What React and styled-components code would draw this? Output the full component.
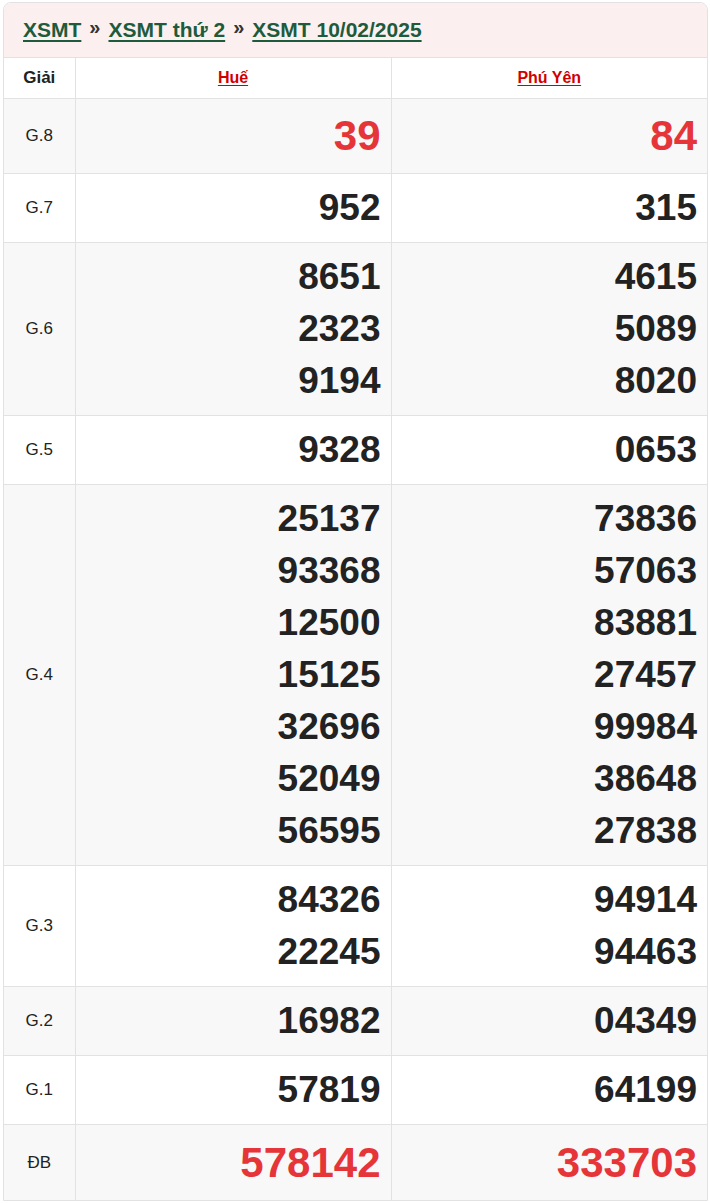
import React from 'react'
import styled, { createGlobalStyle } from 'styled-components'

const GlobalStyle = createGlobalStyle`
  body {
    margin: 0;
    background: #fff;
    font-family: "Liberation Sans", Arial, sans-serif;
  }
`

const data = {
  provinces: ['Huế', 'Phú Yên'],
  rows: [
    { label: 'G.8', size: 'big', values: [['39'], ['84']] },
    { label: 'G.7', values: [['952'], ['315']] },
    { label: 'G.6', values: [['8651', '2323', '9194'], ['4615', '5089', '8020']] },
    { label: 'G.5', values: [['9328'], ['0653']] },
    {
      label: 'G.4',
      values: [
        ['25137', '93368', '12500', '15125', '32696', '52049', '56595'],
        ['73836', '57063', '83881', '27457', '99984', '38648', '27838'],
      ],
    },
    { label: 'G.3', values: [['84326', '22245'], ['94914', '94463']] },
    { label: 'G.2', values: [['16982'], ['04349']] },
    { label: 'G.1', values: [['57819'], ['64199']] },
    { label: 'ĐB', size: 'special', values: [['578142'], ['333703']] },
  ],
}

export default function App() {
  return (
    <>
      <GlobalStyle />
      <Box>
        <Crumbs>
          <Crumb href="#">XSMT</Crumb>
          <Sep>»</Sep>
          <Crumb href="#">XSMT thứ 2</Crumb>
          <Sep>»</Sep>
          <Crumb href="#">XSMT 10/02/2025</Crumb>
        </Crumbs>
        <Table>
          <colgroup>
            <col style={{ width: 71 }} />
            <col />
            <col />
          </colgroup>
          <thead>
            <tr>
              <HeadCell>Giải</HeadCell>
              {data.provinces.map((p) => (
                <HeadCell key={p}>
                  <Province href="#">{p}</Province>
                </HeadCell>
              ))}
            </tr>
          </thead>
          <tbody>
            {data.rows.map((row, i) => (
              <Row key={row.label} $odd={i % 2 === 0}>
                <Label>{row.label}</Label>
                {row.values.map((list, j) => (
                  <NumCell key={j}>
                    {list.map((n) => (
                      <Num key={n} $size={row.size}>
                        {n}
                      </Num>
                    ))}
                  </NumCell>
                ))}
              </Row>
            ))}
          </tbody>
        </Table>
      </Box>
    </>
  )
}

const Box = styled.div`
  margin: 2px 2px 0 3px;
  border: 1px solid #e2e2e2;
  border-radius: 8px 8px 0 0;
  overflow: hidden;
`

const Crumbs = styled.div`
  background: #fcefef;
  padding: 13px 19px 13px;
  line-height: 27px;
  font-size: 21px;
  font-weight: bold;
  border-bottom: 1px solid #e2e2e2;
`

const Crumb = styled.a`
  color: #1d5b3c;
  text-decoration: underline;
  text-underline-offset: 3px;
  text-decoration-thickness: 2px;
`

const Sep = styled.span`
  color: #333;
  margin: 0 8px;
  font-size: 20px;
  position: relative;
  top: -3px;
`

const Table = styled.table`
  width: 100%;
  border-collapse: collapse;
  table-layout: fixed;
`

const HeadCell = styled.th`
  padding: 8px 4px;
  line-height: 24px;
  font-size: 17px;
  font-weight: bold;
  color: #222;
  text-align: center;
  border-left: 1px solid #e2e2e2;
  &:first-child {
    border-left: none;
  }
`

const Province = styled.a`
  color: #d00000;
  font-size: 16px;
  text-decoration: underline;
  text-underline-offset: 2px;
`

const Row = styled.tr`
  background: ${(p) => (p.$odd ? '#f8f8f8' : '#fff')};
  border-top: 1px solid #e2e2e2;
`

const Label = styled.td`
  text-align: center;
  font-size: 17px;
  color: #222;
  padding: 8px 0;
`

const NumCell = styled.td`
  text-align: right;
  padding: 8px 10px 8px 8px;
  border-left: 1px solid #e2e2e2;
  vertical-align: middle;
`

const Num = styled.div`
  font-weight: bold;
  color: ${(p) => (p.$size ? '#e53538' : '#222')};
  font-size: ${(p) => (p.$size === 'big' ? '42px' : p.$size === 'special' ? '42px' : '37px')};
  line-height: ${(p) => (p.$size === 'big' ? '58px' : p.$size === 'special' ? '59px' : '52px')};
`
